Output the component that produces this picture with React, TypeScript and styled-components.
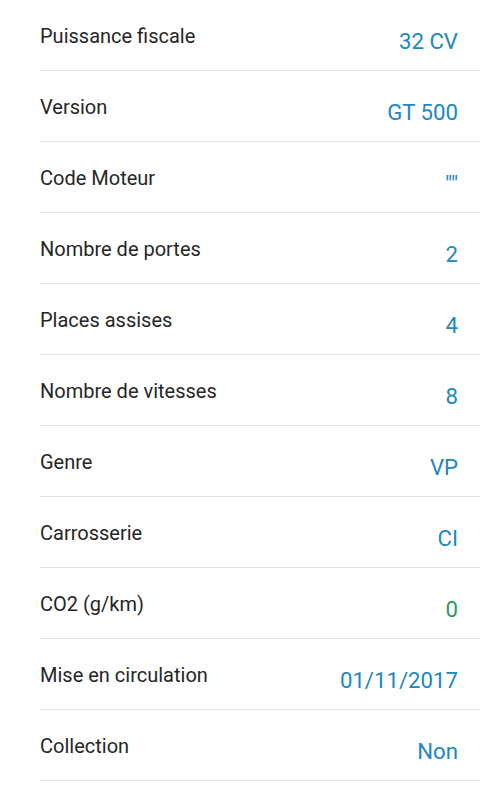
import React from "react";
import styled, { createGlobalStyle } from "styled-components";

const Global = createGlobalStyle`
  html, body { margin: 0; padding: 0; background: #ffffff; }
  body { font-family: Roboto, "Noto Sans", sans-serif; -webkit-font-smoothing: antialiased; }
`;

const List = styled.div`
  display: flex;
  flex-direction: column;
  padding-left: 40px;
  width: 440px;
`;

const Row = styled.div`
  display: flex;
  justify-content: space-between;
  align-items: flex-start;
  height: 70px;
  border-bottom: 1px solid #e3e3e3;
  padding-right: 22px;
  box-sizing: content-box;
`;

const Label = styled.span`
  margin-top: 24px;
  font-size: 20px;
  font-weight: 400;
  line-height: 24px;
  color: #262626;
`;

const Value = styled.span<{ $tone?: "blue" | "green" }>`
  margin-top: 28px;
  font-size: 22.2px;
  font-weight: 400;
  line-height: 26px;
  color: ${(p) => (p.$tone === "green" ? "#2a9d5c" : "#2088be")};
`;

const rows: { label: string; value: string; tone?: "blue" | "green" }[] = [
  { label: "Puissance fiscale", value: "32 CV" },
  { label: "Version", value: "GT 500" },
  { label: "Code Moteur", value: '""' },
  { label: "Nombre de portes", value: "2" },
  { label: "Places assises", value: "4" },
  { label: "Nombre de vitesses", value: "8" },
  { label: "Genre", value: "VP" },
  { label: "Carrosserie", value: "CI" },
  { label: "CO2 (g/km)", value: "0", tone: "green" },
  { label: "Mise en circulation", value: "01/11/2017" },
  { label: "Collection", value: "Non" },
];

export default function App() {
  return (
    <>
      <Global />
      <List>
        {rows.map((r) => (
          <Row key={r.label}>
            <Label>{r.label}</Label>
            <Value $tone={r.tone}>{r.value}</Value>
          </Row>
        ))}
      </List>
    </>
  );
}
